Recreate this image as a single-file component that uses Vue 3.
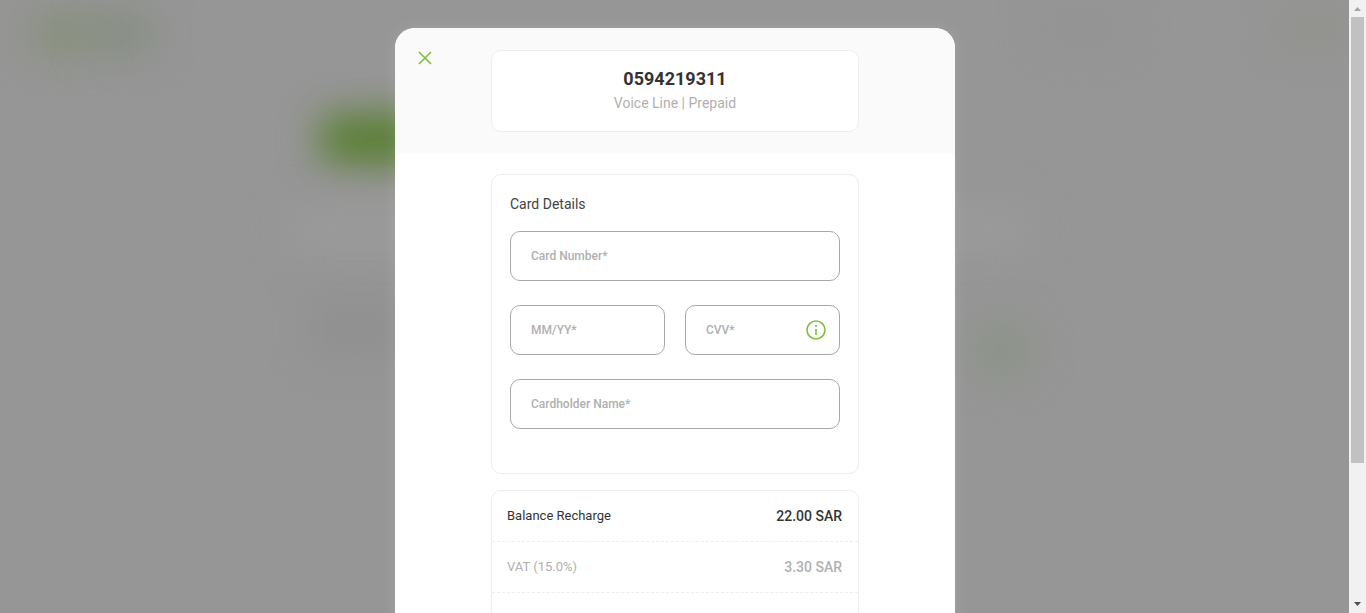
<script setup>
import { ref } from 'vue'

const cardNumber = ref('')
const expiry = ref('')
const cvv = ref('')
const holder = ref('')
const charges = [
  { name: 'Balance Recharge', amount: '22.00 SAR', muted: false },
  { name: 'VAT (15.0%)', amount: '3.30 SAR', muted: true },
]
</script>

<template>
  <div class="page">
    <main class="overlay">
      <div class="backdrop" aria-hidden="true">
        <i class="blob logo"></i>
        <i class="blob logo-end"></i>
        <i class="blob tab"></i>
        <i class="blob panel"></i>
        <i class="blob shade"></i>
        <i class="blob accent"></i>
        <i class="blob nav"></i>
        <i class="blob nav-end"></i>
      </div>
      <section class="modal" role="dialog" aria-modal="true" aria-label="Recharge payment">
        <header class="top">
          <button class="close" type="button" aria-label="Close">
            <svg width="14" height="14" viewBox="0 0 14 14" fill="none" stroke="currentColor" stroke-width="1.6">
              <path d="M1 1L13 13M13 1L1 13" />
            </svg>
          </button>
          <div class="line-card">
            <h1>0594219311</h1>
            <p>Voice Line | Prepaid</p>
          </div>
        </header>

        <form class="card details" @submit.prevent>
          <h2>Card Details</h2>
          <div class="fields">
            <div class="field wide">
              <input id="card-number" v-model="cardNumber" type="text" inputmode="numeric" />
              <label v-show="!cardNumber" for="card-number">Card Number*</label>
            </div>
            <div class="field">
              <input id="expiry" v-model="expiry" type="text" />
              <label v-show="!expiry" for="expiry">MM/YY*</label>
            </div>
            <div class="field">
              <input id="cvv" v-model="cvv" type="text" inputmode="numeric" />
              <label v-show="!cvv" for="cvv">CVV*</label>
              <button class="info" type="button" aria-label="About CVV">
                <svg width="20" height="20" viewBox="0 0 20 20" fill="none">
                  <circle cx="10" cy="10" r="9" stroke="currentColor" stroke-width="1.6" />
                  <path d="M10 5v2M10 9v6" stroke="currentColor" stroke-width="1.6" />
                </svg>
              </button>
            </div>
            <div class="field wide">
              <input id="holder" v-model="holder" type="text" />
              <label v-show="!holder" for="holder">Cardholder Name*</label>
            </div>
          </div>
        </form>

        <dl class="card charges">
          <div v-for="c in charges" :key="c.name" class="charge" :class="{ muted: c.muted }">
            <dt>{{ c.name }}</dt>
            <dd>{{ c.amount }}</dd>
          </div>
        </dl>
      </section>
    </main>
    <div class="scrollbar" aria-hidden="true">
      <svg class="arrow" width="17" height="17" viewBox="0 0 17 17"><path d="M5 11h7L8.500 7z" fill="#a3a3a3" /></svg>
      <div class="track"><div class="thumb"></div></div>
      <svg class="arrow" width="17" height="17" viewBox="0 0 17 17"><path d="M5 6h7L8.500 10z" fill="#505050" /></svg>
    </div>
  </div>
</template>

<style>
body {
  margin: 0;
  overflow: hidden;
}
</style>

<style scoped>
* {
  box-sizing: border-box;
}
.page {
  display: flex;
  height: 100vh;
  overflow: hidden;
  font-family: Roboto, 'Noto Sans', sans-serif;
  color: #333;
}
.overlay {
  position: relative;
  flex: 1;
  padding: 28px 0 0 1px;
  overflow: hidden;
  background: #969696;
}
.backdrop {
  position: absolute;
  inset: 0;
}
.blob {
  position: absolute;
  filter: blur(19px);
}
.logo {
  left: 30px;
  top: 12px;
  width: 64px;
  height: 42px;
  background: rgba(124, 140, 102, 0.55);
}
.logo-end {
  left: 90px;
  top: 12px;
  width: 64px;
  height: 42px;
  background: rgba(123, 139, 117, 0.6);
}
.tab {
  left: 320px;
  top: 114px;
  width: 140px;
  height: 50px;
  border-radius: 18px;
  background: #587e30;
}
.panel {
  left: 290px;
  top: 204px;
  width: 740px;
  height: 50px;
  background: #9a9a9a;
}
.shade {
  left: 310px;
  top: 300px;
  width: 90px;
  height: 56px;
  background: rgba(140, 140, 140, 0.6);
}
.accent {
  left: 970px;
  top: 320px;
  width: 64px;
  height: 60px;
  border-radius: 30px;
  background: rgba(136, 147, 130, 0.7);
}
.nav {
  left: 1040px;
  top: 12px;
  width: 84px;
  height: 30px;
  background: rgba(146, 146, 146, 0.9);
}
.nav-end {
  right: 0;
  top: 14px;
  width: 70px;
  height: 28px;
  background: rgba(144, 144, 136, 0.9);
}
.modal {
  position: relative;
  width: 560px;
  max-width: 100%;
  margin: 0 auto;
  padding-bottom: 40px;
  border-radius: 20px 20px 0 0;
  background: #fff;
  box-shadow: 0 0 16px rgba(255, 255, 255, 0.12);
}
.top {
  position: relative;
  padding: 22px 96px;
  border-radius: 20px 20px 0 0;
  background: #fafafa;
}
button {
  display: flex;
  padding: 0;
  border: 0;
  background: none;
  color: #80bf3a;
  cursor: pointer;
}
.close {
  position: absolute;
  left: 23px;
  top: 23px;
}
.line-card,
.card {
  border: 1px solid #eee;
  border-radius: 10px;
  background: #fff;
}
.line-card {
  padding: 16px;
  text-align: center;
}
h1,
h2,
p,
dl,
dd {
  margin: 0;
}
h1 {
  font-size: 18px;
  line-height: 24px;
  font-weight: 700;
}
p {
  font-size: 14px;
  line-height: 24px;
  color: #b0b0b0;
}
.card {
  margin: 0 96px;
}
.details {
  margin-top: 20px;
  padding: 17px 18px 44px;
}
h2 {
  font-size: 14px;
  line-height: 24px;
  font-weight: 400;
  margin-bottom: 15px;
  color: #444;
}
.fields {
  display: grid;
  grid-template-columns: 1fr 1fr;
  gap: 24px 20px;
}
.field {
  position: relative;
}
.wide {
  grid-column: 1 / -1;
}
.field input {
  display: block;
  width: 100%;
  height: 50px;
  padding: 0 20px;
  border: 1px solid #a8a8a8;
  border-radius: 10px;
  background: #fff;
  font: inherit;
  font-size: 12px;
  color: #333;
}
.field label {
  position: absolute;
  left: 21px;
  top: 15px;
  font-size: 12px;
  line-height: 20px;
  font-weight: 500;
  color: #b0b0b0;
  cursor: text;
}
.info {
  position: absolute;
  right: 14px;
  top: 15px;
}
.charges {
  margin-top: 16px;
  padding-bottom: 50px;
}
.charge {
  display: flex;
  justify-content: space-between;
  padding: 13px 16px 13px 15px;
  border-bottom: 1px dashed #eee;
  font-size: 13px;
  line-height: 24px;
}
dd {
  font-size: 14px;
  font-weight: 500;
}
.muted {
  color: #b0b0b0;
}
.scrollbar {
  display: flex;
  flex-direction: column;
  width: 17px;
  background: #f1f1f1;
}
.arrow {
  display: block;
  flex: none;
}
.track {
  flex: 1;
  padding: 0 2px;
}
.thumb {
  height: 77%;
  background: #c1c1c1;
}
</style>
